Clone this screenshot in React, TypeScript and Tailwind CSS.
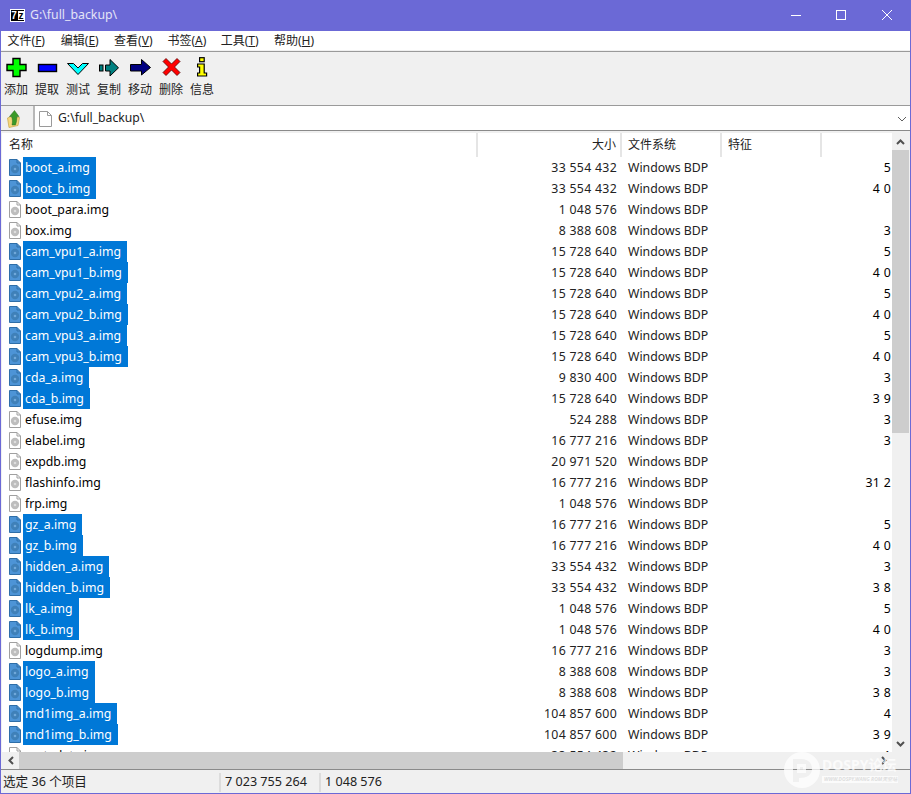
import React from "react";

const F = "font-['Noto_Sans','Noto_Sans_CJK_SC',sans-serif]";

type Row = [string, string, string, boolean];
const rows: Row[] = [
  ["boot_a.img", "33 554 432", "5", true],
  ["boot_b.img", "33 554 432", "4 0", true],
  ["boot_para.img", "1 048 576", "", false],
  ["box.img", "8 388 608", "3", false],
  ["cam_vpu1_a.img", "15 728 640", "5", true],
  ["cam_vpu1_b.img", "15 728 640", "4 0", true],
  ["cam_vpu2_a.img", "15 728 640", "5", true],
  ["cam_vpu2_b.img", "15 728 640", "4 0", true],
  ["cam_vpu3_a.img", "15 728 640", "5", true],
  ["cam_vpu3_b.img", "15 728 640", "4 0", true],
  ["cda_a.img", "9 830 400", "3", true],
  ["cda_b.img", "15 728 640", "3 9", true],
  ["efuse.img", "524 288", "3", false],
  ["elabel.img", "16 777 216", "3", false],
  ["expdb.img", "20 971 520", "", false],
  ["flashinfo.img", "16 777 216", "31 2", false],
  ["frp.img", "1 048 576", "", false],
  ["gz_a.img", "16 777 216", "5", true],
  ["gz_b.img", "16 777 216", "4 0", true],
  ["hidden_a.img", "33 554 432", "3", true],
  ["hidden_b.img", "33 554 432", "3 8", true],
  ["lk_a.img", "1 048 576", "5", true],
  ["lk_b.img", "1 048 576", "4 0", true],
  ["logdump.img", "16 777 216", "3", false],
  ["logo_a.img", "8 388 608", "3", true],
  ["logo_b.img", "8 388 608", "3 8", true],
  ["md1img_a.img", "104 857 600", "4", true],
  ["md1img_b.img", "104 857 600", "3 9", true],
  ["metadata.img", "33 554 432", "1", false],
];

function FileIcon({ sel }: { sel: boolean }) {
  const body = sel ? "#4d94d6" : "#ffffff";
  const line = sel ? "#2e6ea8" : "#a0a0a0";
  const disc = sel ? "#3f80b8" : "#bdbdbd";
  return (
    <svg width="12" height="17" viewBox="0 0 12 17" className="shrink-0">
      <path d="M0.5 0.5H8L11.5 4V16.5H0.5Z" fill={body} stroke={line} />
      <path d="M8 0.5V4H11.5" fill="none" stroke={line} />
      <circle cx="6" cy="10" r="4.2" fill={disc} />
      <circle cx="6" cy="10" r="1.3" fill={sel ? "#6fa8da" : "#dedede"} />
    </svg>
  );
}

const tools: [string, React.ReactNode][] = [
  ["添加", <path d="M8 1.5H15V7.5H21V13.5H15V19.5H8V13.5H2V7.5H8Z" fill="#00ff00" stroke="#000" strokeWidth="1.4" />],
  ["提取", <rect x="2.5" y="7.5" width="18" height="7" fill="#0000ff" stroke="#000" strokeWidth="1.4" />],
  ["测试", <path d="M0.5 6.5H6.5L11 11L15.5 6.5H21.5L11 17.5Z" fill="#00ffff" stroke="#000" strokeWidth="1" />],
  ["复制", <g stroke="#000" strokeWidth="1" fill="#008080"><rect x="1.5" y="8" width="3.5" height="6" /><path d="M7.5 8H12V2.5L20.5 10.8L12 19V14H7.5Z" /></g>],
  ["移动", <path d="M1.5 7.5H12.5V2.5L21.5 10.5L12.5 18V14H1.5Z" fill="#000080" stroke="#000" strokeWidth="1" />],
  ["删除", <path d="M6 1.5L11.5 7L17 1.5L20 4.5L14.5 10L20 15.5L17 18.5L11.5 13L6 18.5L3 15.5L8.5 10L3 4.5Z" fill="#ff0000" stroke="#500" strokeWidth="0.8" />],
  ["信息", <g fill="#ffff00" stroke="#000" strokeWidth="1.2"><rect x="8.6" y="0.7" width="4.6" height="4" /><path d="M6.6 7H13.2V16H15.6V19H6.6V16H8.6V10H6.6Z" /></g>],
];

const menus: [string, string][] = [
  ["文件", "F"],
  ["编辑", "E"],
  ["查看", "V"],
  ["书签", "A"],
  ["工具", "T"],
  ["帮助", "H"],
];

export default function App() {
  return (
    <div className={`${F} w-[911px] h-[794px] overflow-hidden relative bg-[#f0f0f0] flex flex-col border-x border-b border-[#6b69d6] text-[13px] text-black`}>
      {/* title bar */}
      <div className="h-[31px] -mx-[1px] bg-[#6b69d6] flex items-center shrink-0 text-white">
        <div className="ml-[10px] mr-[5px] w-[15px] h-[13px] bg-black border border-white flex items-center justify-center text-[10px] font-bold leading-none font-['Liberation_Sans']">
          <span className="text-white w-[6px] text-center leading-[9px]">7</span>
          <span className="bg-white text-black w-[6px] text-center leading-[9px] ml-[1px]">z</span>
        </div>
        <span className="text-[12.3px] text-[#e4e4f6]">G:\full_backup\</span>
        <div className="ml-auto flex items-center h-full">
          <svg width="46" height="31" viewBox="0 0 46 31"><path d="M18 15.5H28" stroke="#fff" strokeWidth="1" /></svg>
          <svg width="46" height="31" viewBox="0 0 46 31"><rect x="17.5" y="10.5" width="9" height="9" fill="none" stroke="#fff" /></svg>
          <svg width="46" height="31" viewBox="0 0 46 31"><path d="M17 10L27 20M27 10L17 20" stroke="#fff" /></svg>
        </div>
      </div>
      {/* menu */}
      <div className="h-[19px] bg-white flex items-center shrink-0 pl-[6.5px] pt-[1px] gap-[13.3px] text-[12px] text-[#222]">
        {menus.map(([m, k]) => (
          <span key={m} className="whitespace-nowrap w-[40px]">
            {m}(<u>{k}</u>)
          </span>
        ))}
      </div>
      <div className="h-[1px] shrink-0 bg-[#f0f0f0]" />
      {/* toolbar */}
      <div className="h-[55px] shrink-0 border-y border-[#9a9a9a] flex pl-[0.5px] pt-[5px] -ml-[1px]">
        {tools.map(([label, icon]) => (
          <div key={label} className="w-[31px] flex flex-col items-center">
            <svg width="22" height="20" viewBox="0 0 22 20" className="overflow-visible">{icon}</svg>
            <span className="text-[12px] leading-[17px] mt-[4px] text-[#222] whitespace-nowrap">{label}</span>
          </div>
        ))}
      </div>
      {/* address */}
      <div className="h-[25px] shrink-0 flex items-center -ml-[1px] border-b border-b-[#8a8a8a]">
        <div className="w-[33px] flex justify-start pl-[6px] pt-[1px]">
          <svg width="16" height="18" viewBox="0 0 16 18">
            <path d="M1.5 8L5 6.5L6 7.5H13.5L12 15.5L3 17.5Z" fill="#f6d77c" stroke="#c9a545" strokeWidth="0.7" />
            <path d="M6 15C6.8 12 6.5 9 5.5 6.5H3.5L8.5 0.5L13 6.5H10.8C11 9 10.5 12 9.5 15Z" fill="#3a9a28" stroke="#2a6a1e" strokeWidth="0.5" />
          </svg>
        </div>
        <div className="flex-1 h-full bg-white border-l-2 border-l-[#b8b8b8] flex items-center pl-[4px] pt-[1px]">
          <svg width="13" height="16" viewBox="0 0 13 16">
            <path d="M0.5 0.5H8.5L12.5 4.5V15.5H0.5Z" fill="#fff" stroke="#9a9a9a" />
            <path d="M8.5 0.5V4.5H12.5" fill="none" stroke="#9a9a9a" />
          </svg>
          <span className="ml-[6px] text-[12.2px] text-[#222]">G:\full_backup\</span>
          <svg className="ml-auto mr-[3px]" width="10" height="6" viewBox="0 0 10 6"><path d="M1 1L5 5L9 1" fill="none" stroke="#606060" /></svg>
        </div>
      </div>
      {/* list */}
      <div className="flex-1 min-h-0 flex flex-col bg-white border-t-2 border-x border-[#f0f0f0]">
        <div className="flex-1 min-h-0 flex">
          <div className="flex-1 min-w-0 flex flex-col overflow-hidden">
            <div className="h-[24px] shrink-0 flex items-center text-[12px] text-[#222]">
              <div className="w-[476px] pl-[7px] border-r-2 border-r-[#e5e5e5] h-full flex items-center">名称</div>
              <div className="w-[144px] pr-[4px] text-right border-r-2 border-r-[#e5e5e5] h-full flex items-center justify-end">大小</div>
              <div className="w-[100px] pl-[6px] border-r-2 border-r-[#e5e5e5] h-full flex items-center">文件系统</div>
              <div className="w-[100px] pl-[6px] border-r-2 border-r-[#e5e5e5] h-full flex items-center">特征</div>
            </div>
            <div className="flex-1 min-h-0 overflow-hidden">
              {rows.map(([n, s, a, sel]) => (
                <div key={n} className="h-[21px] flex items-center text-[12.3px] leading-[21px]">
                  <div className="w-[476px] flex items-center pl-[7px]">
                    <FileIcon sel={sel} />
                    <span className={`ml-[2px] h-[21px] pl-[2px] pr-[6px] whitespace-nowrap ${sel ? "bg-[#0078d7] text-white" : "text-black"}`}>{n}</span>
                  </div>
                  <div className="w-[139px] text-right text-[#222] whitespace-pre tracking-[0.3px]">{s}</div>
                  <div className="w-[110px] pl-[11px] text-[#222] whitespace-nowrap">Windows BDP</div>
                  <div className="flex-1 text-right pr-[1px] whitespace-pre tracking-[0.3px]">{a}</div>
                </div>
              ))}
            </div>
          </div>
          {/* vertical scrollbar */}
          <div className="w-[17px] shrink-0 bg-[#f0f0f0] flex flex-col">
            <div className="h-[17px] flex items-center justify-center"><svg width="9" height="6" viewBox="0 0 9 6"><path d="M1 5L4.5 1.5L8 5" fill="none" stroke="#505050" strokeWidth="2" /></svg></div>
            <div className="h-[283px] bg-[#cdcdcd]" />
            <div className="flex-1" />
            <div className="h-[17px] flex items-center justify-center"><svg width="9" height="6" viewBox="0 0 9 6"><path d="M1 1L4.5 4.5L8 1" fill="none" stroke="#505050" strokeWidth="2" /></svg></div>
          </div>
        </div>
        {/* horizontal scrollbar */}
        <div className="h-[17px] shrink-0 bg-[#f0f0f0] flex items-center">
          <div className="w-[17px] flex justify-center"><svg width="6" height="9" viewBox="0 0 6 9"><path d="M5 1L1.5 4.5L5 8" fill="none" stroke="#505050" strokeWidth="2" /></svg></div>
          <div className="w-[604px] h-full bg-[#cdcdcd]" />
          <div className="flex-1" />
          <div className="w-[17px] flex justify-center mr-[17px]"><svg width="6" height="9" viewBox="0 0 6 9"><path d="M1 1L4.5 4.5L1 8" fill="none" stroke="#505050" strokeWidth="2" /></svg></div>
        </div>
      </div>
      {/* status */}
      <div className="h-[24px] shrink-0 border-t border-t-[#8a8a8a] flex items-center pt-[1px] text-[12.6px] text-[#222]">
        <div className="w-[220px] pl-[2px] border-r-2 border-r-[#dcdcdc] h-[19px] flex items-center whitespace-nowrap">选定 36 个项目</div>
        <div className="w-[100px] pl-[4px] border-r-2 border-r-[#dcdcdc] h-[19px] flex items-center whitespace-nowrap">7 023 755 264</div>
        <div className="pl-[4px] whitespace-nowrap">1 048 576</div>
      </div>
      {/* watermark */}
      <div className="absolute right-[12px] bottom-[5px] flex items-center text-white pointer-events-none opacity-75">
        <svg width="36" height="36" viewBox="0 0 36 36" className="shrink-0">
          <path d="M18 0A18 18 0 1 1 18 36A18 18 0 1 1 18 0ZM9 7V30H15V26C23 26 28 23 28 16.5C28 10.5 23 7 17 7Z" fill="#fff" fillRule="evenodd" />
          <rect x="13" y="12" width="9" height="9" fill="#fff" />
          <rect x="16" y="15" width="3" height="3" fill="#f0f0f0" />
        </svg>
        <div className="ml-[2px] w-[76px] flex flex-col overflow-hidden">
          <span className="text-[14px] font-bold leading-[14px] whitespace-nowrap">DOSPY论坛</span>
          <span className="text-[5px] font-bold italic leading-[7px] whitespace-nowrap mt-[4px] pl-[2px] bg-white text-[#d8d8d8]">WWW.DOSPY.WANG ROM天空站</span>
        </div>
      </div>
    </div>
  );
}
